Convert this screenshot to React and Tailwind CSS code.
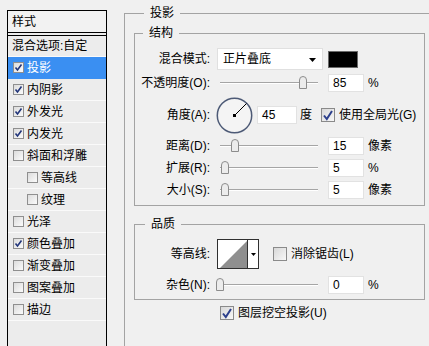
// App.jsx
// Layer style dialog: drop shadow panel

const styleItems = [
  { label: '投影', checked: true, selected: true },
  { label: '内阴影', checked: true },
  { label: '外发光', checked: true },
  { label: '内发光', checked: true },
  { label: '斜面和浮雕' },
  { label: '等高线', indent: true },
  { label: '纹理', indent: true },
  { label: '光泽' },
  { label: '颜色叠加', checked: true },
  { label: '渐变叠加' },
  { label: '图案叠加' },
  { label: '描边' },
];

function SmallCheck({ checked }) {
  return (
    <div className="w-[11px] h-[11px] border border-[#8f8f8f] bg-gradient-to-br from-[#dcdcdc] to-[#fbfbfb] flex items-center justify-center shrink-0">
      {checked && (
        <svg width="9" height="9" viewBox="0 0 9 9">
          <path d="M1.5 4.5 L3.5 7 L7.5 1.5" fill="none" stroke="#22357a" strokeWidth="1.6" />
        </svg>
      )}
    </div>
  );
}

function BigCheck({ checked }) {
  return (
    <div className="w-[14px] h-[14px] border border-[#8a8a8a] bg-gradient-to-br from-[#d8d8d8] to-[#f8f8f8] flex items-center justify-center shrink-0">
      {checked && (
        <svg width="12" height="12" viewBox="0 0 12 12">
          <path d="M2 6.5 L4.8 10 L10 2" fill="none" stroke="#2c3f8c" strokeWidth="2" />
        </svg>
      )}
    </div>
  );
}

function Slider({ pos }) {
  return (
    <div className="relative w-[106px] h-[22px] shrink-0">
      <div className="absolute left-[3px] right-[5px] top-[10px] h-[2px] border-t border-[#a5a5a5] border-b border-b-white" />
      <svg
        className="absolute top-[4px]"
        style={{ left: pos - 4 }}
        width="8"
        height="13"
        viewBox="0 0 8 13"
      >
        <path d="M0.5 12.5 V4 Q0.5 0.5 4 0.5 Q7.5 0.5 7.5 4 V12.5 Z" fill="#ececec" stroke="#8c8c8c" />
      </svg>
    </div>
  );
}

function NumBox({ value, w = 'w-[36px]' }) {
  return (
    <div className={`${w} h-[18px] bg-white border border-[#e2e2e2] flex items-center pl-[4px] text-[12px] shrink-0`}>
      {value}
    </div>
  );
}

function Label({ children }) {
  return <div className="w-[76px] text-right shrink-0 pr-[1px]">{children}</div>;
}

function SliderRow({ label, pos, value, unit, className = '' }) {
  return (
    <div className={`flex items-center h-[22px] ${className}`}>
      <Label>{label}</Label>
      <div className="ml-[6px]">
        <Slider pos={pos} />
      </div>
      <div className="ml-[5px]">
        <NumBox value={value} />
      </div>
      <div className="ml-[4px]">{unit}</div>
    </div>
  );
}

export default function App() {
  return (
    <div
      className="w-[429px] h-[346px] overflow-hidden bg-[#f0f0f0] flex text-[12px] text-black leading-none"
      style={{ fontFamily: '"Liberation Sans", "Noto Sans CJK SC", sans-serif' }}
    >
      {/* left list of styles */}
      <div className="ml-[7px] mt-[10px] w-[100px] border-l border-r border-t border-black bg-[#ececec] flex flex-col shrink-0">
        <div className="h-[22px] border-b border-black bg-[#f2f2f2] flex items-center pl-[4px]">样式</div>
        <div className="h-[3px] border-b border-black" />
        <div className="h-[21px] border-b border-[#fafafa] flex items-center pl-[4px]">混合选项:自定</div>
        {styleItems.map((item) => (
          <div
            key={item.label}
            className={`h-[22px] border-b flex items-center gap-[3px] ${
              item.selected ? 'bg-[#3a8ff2] text-white border-[#3a8ff2]' : 'border-[#fafafa]'
            } ${item.indent ? 'pl-[19px]' : 'pl-[5px]'}`}
          >
            <SmallCheck checked={item.checked} />
            <span>{item.label}</span>
          </div>
        ))}
      </div>

      {/* right: drop shadow settings */}
      <fieldset className="ml-[17px] mt-[5px] w-[330px] h-[400px] border-l border-t border-[#a3a3a3] pl-[9px] shrink-0">
        <legend className="ml-[10px] px-[6px] leading-[16px]">投影</legend>

        <fieldset className="mt-[4px] w-[291px] border border-[#a3a3a3] pt-[7px] pb-[4px]">
          <legend className="ml-[8px] px-[6px] leading-[16px]">结构</legend>

          <div className="flex items-center h-[22px]">
            <Label>混合模式:</Label>
            <div className="ml-[6px] w-[106px] h-[22px] bg-white border border-[#e0e0e0] flex items-center pl-[5px] relative shrink-0">
              正片叠底
              <svg className="absolute right-[6px] top-[9px]" width="7" height="4" viewBox="0 0 7 4">
                <path d="M0 0 H7 L3.5 4 Z" fill="#000" />
              </svg>
            </div>
            <div className="ml-[5px] w-[30px] h-[17px] bg-black border border-[#6a6a6a] shrink-0" />
          </div>

          <SliderRow className="mt-[2px]" label="不透明度(O):" pos={86} value="85" unit="%" />

          <div className="flex items-center h-[36px] mt-[3px]">
            <Label>角度(A):</Label>
            <svg className="ml-[5px] shrink-0" width="37" height="37" viewBox="0 0 37 37">
              <circle cx="18.5" cy="18.5" r="17.2" fill="#f4f4f4" stroke="#4d5a76" strokeWidth="1.5" />
              <line x1="18.5" y1="18.5" x2="30.5" y2="6.5" stroke="#000" strokeWidth="1" />
              <rect x="17" y="17" width="3" height="3" fill="#000" />
            </svg>
            <div className="ml-[4px]">
              <NumBox value="45" w="w-[40px]" />
            </div>
            <div className="ml-[3px]">度</div>
            <div className="ml-[9px]">
              <BigCheck checked />
            </div>
            <div className="ml-[4px]">使用全局光(G)</div>
          </div>

          <SliderRow className="mt-[2px]" label="距离(D):" pos={18} value="15" unit="像素" />
          <SliderRow label="扩展(R):" pos={8} value="5" unit="%" />
          <SliderRow label="大小(S):" pos={8} value="5" unit="像素" />
        </fieldset>

        <fieldset className="mt-[10px] w-[291px] border border-[#a3a3a3] pt-[7px] pb-[3px]">
          <legend className="ml-[10px] px-[6px] leading-[16px]">品质</legend>

          <div className="flex items-center h-[30px]">
            <Label>等高线:</Label>
            <div className="ml-[6px] flex h-[30px] border border-[#303030] shrink-0">
              <svg width="29" height="28" viewBox="0 0 29 28" className="bg-white">
                <path d="M2 28 L29 1 V28 Z" fill="#8f8f8f" />
              </svg>
              <div className="w-[11px] border-l border-[#303030] bg-white flex items-center justify-center">
                <svg width="5" height="3" viewBox="0 0 5 3">
                  <path d="M0 0 H5 L2.5 3 Z" fill="#000" />
                </svg>
              </div>
            </div>
            <div className="ml-[14px]">
              <BigCheck />
            </div>
            <div className="ml-[4px]">消除锯齿(L)</div>
          </div>

          <SliderRow className="mt-[5px]" label="杂色(N):" pos={3} value="0" unit="%" />
        </fieldset>

        <div className="flex items-center h-[22px] mt-[2px] ml-[86px]">
          <BigCheck checked />
          <div className="ml-[4px]">图层挖空投影(U)</div>
        </div>
      </fieldset>
    </div>
  );
}
